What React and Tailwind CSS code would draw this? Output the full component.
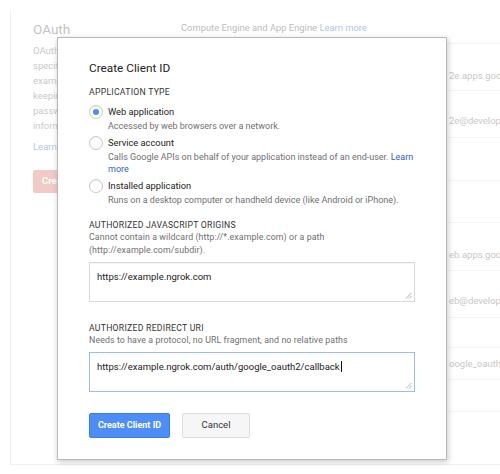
import React from "react";

const rows = [
  { h: 47, pt: 26, text: "2e.apps.googleusercontent.com" },
  { h: 47, pt: 24, text: "2e@developer.gserviceaccount.com" },
  { h: 43, pt: 0, text: "" },
  { h: 42, pt: 0, text: "" },
  { h: 48, pt: 26, text: "eb.apps.googleusercontent.com" },
  { h: 47, pt: 24, text: "eb@developer.gserviceaccount.com" },
  { h: 30, pt: 0, text: "" },
  { h: 32, pt: 10, text: "oogle_oauth2/callback" },
  { h: 32, pt: 0, text: "" },
];

function Radio({ checked }) {
  return (
    <span className="flex h-[14px] w-[14px] shrink-0 items-center justify-center rounded-full border border-[#c9c9c9] bg-white shadow-[inset_0_1px_1px_rgba(0,0,0,0.08)]">
      {checked ? <span className="h-[6px] w-[6px] rounded-full bg-[#4d8ef8]" /> : null}
    </span>
  );
}

function Option({ checked, label, children }) {
  return (
    <div className="flex gap-[5px]">
      <Radio checked={checked} />
      <div>
        <div className="text-[9.3px] leading-[14px] text-[#222]">{label}</div>
        <div className="mt-[1px] text-[9px] leading-[12px] text-[#6f6f6f]">{children}</div>
      </div>
    </div>
  );
}

function Grip() {
  return (
    <svg className="absolute bottom-[2px] right-[2px]" width="7" height="7" viewBox="0 0 7 7">
      <path d="M6.5 1 L1 6.5 M6.5 4 L4 6.5" stroke="#999" strokeWidth="0.8" />
    </svg>
  );
}

export default function App() {
  return (
    <div className="relative h-[474px] w-[500px] overflow-hidden bg-white font-['Roboto',sans-serif]">
      {/* faded page behind the dialog */}
      <div className="ml-[10px] mt-[10px] flex h-[455px] w-[520px] border-b border-l border-[#f0f0f0]">
        <div className="w-[170px] shrink-0 pl-[22px] pt-[10px]">
          <div className="text-[13.5px] leading-[18px] text-[#c4c4c4]">OAuth</div>
          <div className="mt-[4.5px] whitespace-nowrap text-[9.5px] leading-[15px] text-[#cacaca]">
            <div>OAuth 2.0 allows users to share</div>
            <div>specific data with you (for</div>
            <div>example, contact lists) while</div>
            <div>keeping their usernames,</div>
            <div>passwords, and other</div>
            <div>information private.</div>
          </div>
          <div className="mt-[6px] text-[9.5px] leading-[15px] text-[#b3c7f2]">Learn more</div>
          <div className="mt-[16.5px] flex h-[23px] w-[110px] items-center whitespace-nowrap rounded-[2px] bg-[#f3cbc6] px-[9px] text-[9.5px] font-bold text-white">
            Create new Client ID
          </div>
        </div>
        <div className="flex-1 pt-[11px]">
          <div className="text-[9.4px] leading-[14px] text-[#bcbcbc]">
            Compute Engine and App Engine <span className="text-[#b0c4f0]">Learn more</span>
          </div>
          <div className="mt-[8px] border-t border-[#f3f3f3]">
            {rows.map((r, i) => (
              <div
                key={i}
                className="flex border-b border-[#f3f3f3] text-[9.5px] leading-[12px] text-[#c8c8c8]"
                style={{ height: r.h, paddingTop: r.pt }}
              >
                <div className="w-[268px] shrink-0" />
                <div className="whitespace-nowrap">{r.text}</div>
              </div>
            ))}
          </div>
        </div>
      </div>

      {/* dialog */}
      <div className="absolute left-[57px] top-[37px] h-[423px] w-[390px] border border-[#b9b9b9] bg-white px-[31px] pt-[22px] shadow-[1px_2px_6px_rgba(0,0,0,0.22)]">
        <div className="text-[11.8px] leading-[16px] text-[#222]">Create Client ID</div>
        <div className="mt-[10px] text-[8.7px] leading-[12px] tracking-[0.25px] text-[#333]">APPLICATION TYPE</div>

        <div className="mt-[7px] flex flex-col gap-[4px]">
          <Option checked label="Web application">
            Accessed by web browsers over a network.
          </Option>
          <Option label="Service account">
            Calls Google APIs on behalf of your application instead of an end-user.{" "}
            <span className="text-[#2d62d0]">Learn</span>
            <br />
            <span className="text-[#2d62d0]">more</span>
          </Option>
          <Option label="Installed application">
            Runs on a desktop computer or handheld device (like Android or iPhone).
          </Option>
        </div>

        <div className="mt-[13px] text-[8.7px] leading-[12px] tracking-[0.25px] text-[#333]">
          AUTHORIZED JAVASCRIPT ORIGINS
        </div>
        <div className="text-[8.8px] leading-[13px] tracking-[0.1px] text-[#6f6f6f]">
          Cannot contain a wildcard (http://*.example.com) or a path
          <br />
          (http://example.com/subdir).
        </div>
        <div className="relative mt-[5px] h-[40px] border border-[#dadada] px-[7px] pt-[7px] text-[9.5px] leading-[13px] text-[#222] shadow-[inset_0_1px_1px_rgba(0,0,0,0.04)]">
          https://example.ngrok.com
          <Grip />
        </div>

        <div className="mt-[20px] text-[8.7px] leading-[12px] tracking-[0.25px] text-[#333]">
          AUTHORIZED REDIRECT URI
        </div>
        <div className="text-[8.8px] leading-[12px] tracking-[0.1px] text-[#6f6f6f]">
          Needs to have a protocol, no URL fragment, and no relative paths
        </div>
        <div className="relative mt-[6px] h-[40px] border border-[#9dbcf5] px-[7px] pt-[6px] text-[9.5px] leading-[13px] text-[#222]">
          https://example.ngrok.com/auth/google_oauth2/callback
          <span className="ml-[1px] inline-block h-[11px] w-[1px] translate-y-[2px] bg-[#111]" />
          <Grip />
        </div>

        <div className="mt-[21px] flex gap-[12px]">
          <div className="flex h-[25px] w-[81px] items-center justify-center rounded-[2px] border border-[#3b7de8] bg-[#4d8ef6] text-[9px] font-bold text-white">
            Create Client ID
          </div>
          <div className="flex h-[25px] w-[68px] items-center justify-center rounded-[2px] border border-[#dcdcdc] bg-[#f6f6f6] text-[9.5px] text-[#333]">
            Cancel
          </div>
        </div>
      </div>
    </div>
  );
}
